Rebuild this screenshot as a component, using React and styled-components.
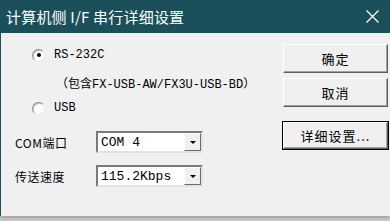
import styled, { createGlobalStyle } from 'styled-components';

const GlobalStyle = createGlobalStyle`
  html, body {
    margin: 0;
    padding: 0;
    background: #cfcfcf;
  }
  body {
    width: 390px;
    height: 221px;
    overflow: hidden;
  }
`;

const Window = styled.div`
  width: 390px;
  height: 216px;
  box-sizing: border-box;
  border-left: 1px solid #1b505a;
  background: #f0f0f0;
  display: flex;
  flex-direction: column;
  box-shadow: 0 2px 4px rgba(0, 0, 0, 0.25);
`;

const TitleBar = styled.div`
  height: 33px;
  flex: none;
  background: #1b505a;
  display: flex;
  align-items: center;
  justify-content: space-between;
  padding: 0 11px 0 5px;
  color: #ffffff;
  font-family: 'Noto Sans CJK SC', 'Noto Sans', sans-serif;
  font-size: 15px;
  letter-spacing: 0.2px;
`;

const Body = styled.div`
  flex: 1;
  display: flex;
  font-family: 'Liberation Mono', 'Noto Sans CJK SC', monospace;
  font-size: 12px;
  color: #000;
`;

const LeftColumn = styled.div`
  width: 282px;
  display: flex;
  flex-direction: column;
  padding-top: 14px;
`;

const RadioRow = styled.label`
  height: 16px;
  display: flex;
  align-items: center;
  gap: 9px;
  padding-left: 31px;
  margin-bottom: ${({ $after }) => $after || 0}px;
`;

const RadioCircle = styled.span`
  width: 11px;
  height: 11px;
  border-radius: 50%;
  background: #fff;
  border: 1px solid;
  border-color: #8a8a8a #e8e8e8 #e8e8e8 #8a8a8a;
  box-shadow: inset 1px 1px 0 #c8c8c8;
  display: flex;
  align-items: center;
  justify-content: center;
  &::after {
    content: '';
    width: 4px;
    height: 4px;
    border-radius: 50%;
    background: ${({ $checked }) => ($checked ? '#000' : 'transparent')};
  }
`;

const Note = styled.div`
  height: 16px;
  display: flex;
  align-items: center;
  padding-left: 55px;
  margin-bottom: 9px;
  white-space: nowrap;
`;

const FieldRow = styled.div`
  height: 22px;
  display: flex;
  align-items: center;
  padding-left: 14px;
  margin-top: ${({ $top }) => $top}px;
`;

const FieldLabel = styled.span`
  width: 81px;
  font-family: 'Noto Sans CJK SC', 'Liberation Mono', sans-serif;
  font-size: 12px;
  letter-spacing: 0.5px;
`;

const Select = styled.div`
  width: 107px;
  height: 22px;
  box-sizing: border-box;
  background: #fff;
  border: 2px solid;
  border-color: #7a7a7a #e3e3e3 #e3e3e3 #7a7a7a;
  display: flex;
  align-items: center;
  justify-content: space-between;
  padding-left: 3px;
`;

const SelectValue = styled.span`
  font-family: 'Liberation Mono', monospace;
  font-size: 13px;
`;

const DropButton = styled.span`
  width: 17px;
  height: 18px;
  box-sizing: border-box;
  background: #f0f0f0;
  border: 1px solid;
  border-color: #ffffff #6a6a6a #6a6a6a #ffffff;
  display: flex;
  align-items: center;
  justify-content: center;
  &::after {
    content: '';
    border-left: 3px solid transparent;
    border-right: 3px solid transparent;
    border-top: 3px solid #000;
    margin-top: 1px;
  }
`;

const RightColumn = styled.div`
  display: flex;
  flex-direction: column;
  padding-top: 11px;
`;

const Button = styled.button`
  width: 105px;
  height: ${({ $h }) => $h || 29}px;
  margin-bottom: ${({ $after }) => $after || 0}px;
  box-sizing: border-box;
  background: #f0f0f0;
  border: 1px solid;
  border-color: #ffffff #5f5f5f #5f5f5f #ffffff;
  box-shadow: ${({ $default }) =>
    $default ? '0 0 0 1px #000, inset -1px -1px 0 #a0a0a0' : 'inset -1px -1px 0 #a0a0a0'};
  font-family: 'Noto Sans CJK SC', 'Liberation Mono', sans-serif;
  font-size: 13px;
  letter-spacing: 1px;
  color: #000;
  padding: 0;
`;

const App = () => {
  return (
    <>
      <GlobalStyle />
      <Window>
        <TitleBar>
          <span>计算机侧 I/F 串行详细设置</span>
          <svg width="13" height="13" viewBox="0 0 13 13">
            <path d="M0.5 0.5 L12.5 12.5 M12.5 0.5 L0.5 12.5" stroke="#fff" strokeWidth="1.3" />
          </svg>
        </TitleBar>
        <Body>
          <LeftColumn>
            <RadioRow $after={12}>
              <RadioCircle $checked />
              <span>RS-232C</span>
            </RadioRow>
            <Note>（包含FX-USB-AW/FX3U-USB-BD）</Note>
            <RadioRow>
              <RadioCircle />
              <span>USB</span>
            </RadioRow>
            <FieldRow $top={15}>
              <FieldLabel>COM端口</FieldLabel>
              <Select>
                <SelectValue>COM 4</SelectValue>
                <DropButton />
              </Select>
            </FieldRow>
            <FieldRow $top={12}>
              <FieldLabel>传送速度</FieldLabel>
              <Select>
                <SelectValue>115.2Kbps</SelectValue>
                <DropButton />
              </Select>
            </FieldRow>
          </LeftColumn>
          <RightColumn>
            <Button $after={5}>确定</Button>
            <Button $after={15}>取消</Button>
            <Button $h={27} $default>详细设置...</Button>
          </RightColumn>
        </Body>
      </Window>
    </>
  );
};

export default App;
